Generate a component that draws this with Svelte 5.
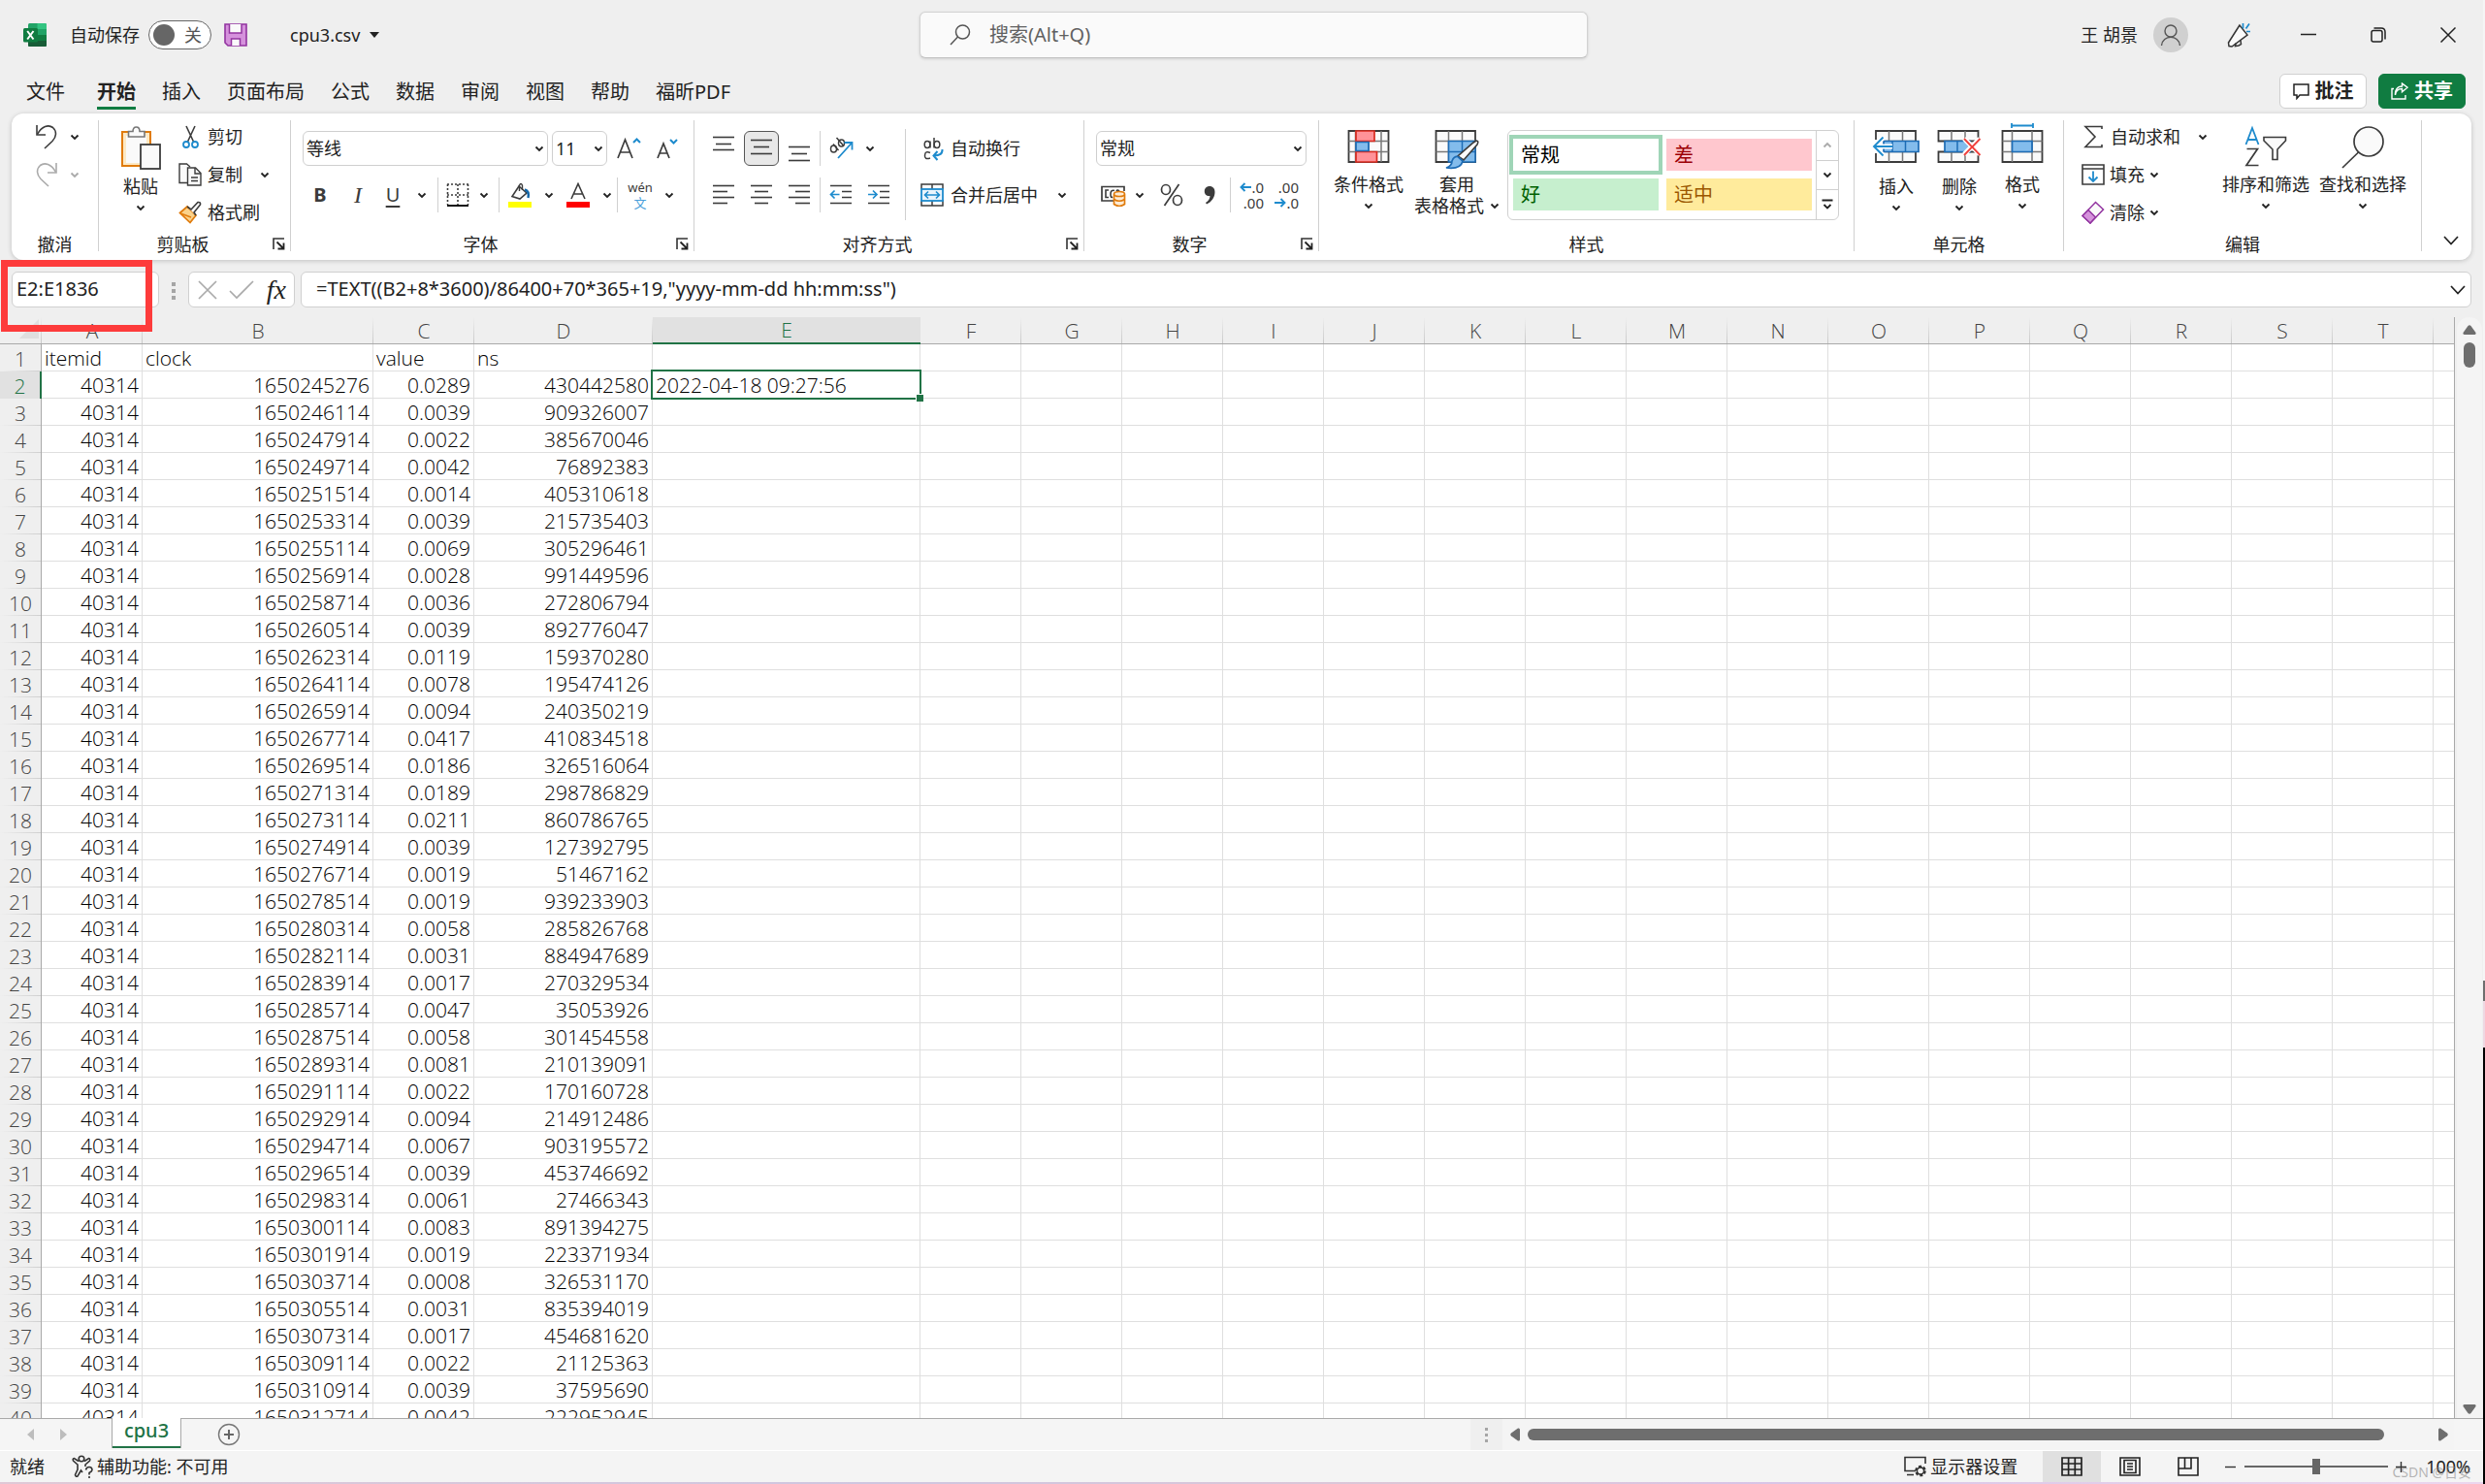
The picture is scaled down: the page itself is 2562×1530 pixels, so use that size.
<script>
  const clocks = [
    1650245276, 1650246114, 1650247914, 1650249714, 1650251514, 1650253314, 1650255114, 1650256914,
    1650258714, 1650260514, 1650262314, 1650264114, 1650265914, 1650267714, 1650269514, 1650271314,
    1650273114, 1650274914, 1650276714, 1650278514, 1650280314, 1650282114, 1650283914, 1650285714,
    1650287514, 1650289314, 1650291114, 1650292914, 1650294714, 1650296514, 1650298314, 1650300114,
    1650301914, 1650303714, 1650305514, 1650307314, 1650309114, 1650310914, 1650312714
  ];
  const values = [
    '0.0289', '0.0039', '0.0022', '0.0042', '0.0014', '0.0039', '0.0069', '0.0028', '0.0036', '0.0039',
    '0.0119', '0.0078', '0.0094', '0.0417', '0.0186', '0.0189', '0.0211', '0.0039', '0.0019', '0.0019',
    '0.0058', '0.0031', '0.0017', '0.0047', '0.0058', '0.0081', '0.0022', '0.0094', '0.0067', '0.0039',
    '0.0061', '0.0083', '0.0019', '0.0008', '0.0031', '0.0017', '0.0022', '0.0039', '0.0042'
  ];
  const ns = [
    430442580, 909326007, 385670046, 76892383, 405310618, 215735403, 305296461, 991449596, 272806794,
    892776047, 159370280, 195474126, 240350219, 410834518, 326516064, 298786829, 860786765, 127392795,
    51467162, 939233903, 285826768, 884947689, 270329534, 35053926, 301454558, 210139091, 170160728,
    214912486, 903195572, 453746692, 27466343, 891394275, 223371934, 326531170, 835394019, 454681620,
    21125363, 37595690, 222952945
  ];
  const rows = clocks.map((c, i) => ({ n: i + 2, clock: c, value: values[i], ns: ns[i] }));
  const widths = { A: 104, B: 238, C: 104, D: 184, E: 276 };
  const cols = 'ABCDEFGHIJKLMNOPQRST'.split('').map((name) => ({ name, w: widths[name] ?? 104 }));
  const blanks = cols.slice(5);
  const tabs = ['文件', '开始', '插入', '页面布局', '公式', '数据', '审阅', '视图', '帮助', '福昕PDF'];
  let active = $state('开始');
  let zoom = $state(50);
</script>

{#snippet chev()}
  <svg class="chev" width="10" height="7" viewBox="0 0 10 7"><path d="M1.5 1.5 5 5 8.5 1.5" /></svg>
{/snippet}

{#snippet launcher()}
  <button class="launcher" aria-label="对话框启动器">
    <svg width="13" height="13" viewBox="0 0 13 13"><path d="M1 12V1H12" stroke="#333" stroke-width="1.6" fill="none" /><path d="M4.500 4.500 11 11M11.500 5.500V11.500H5.500" stroke="#222" stroke-width="1.8" fill="none" /></svg>
  </button>
{/snippet}

{#snippet lines(a)}
  <svg width="24" height="36" viewBox="0 0 24 36">
    {#each a as [x1, x2, y]}<path d="M{x1} {y}.5H{x2}" stroke="#3b3b3b" stroke-width="1.6" />{/each}
  </svg>
{/snippet}

<div class="frame">
  <div class="app">
    <header class="title">
      <div class="t-left">
        <svg class="logo" width="24" height="24" viewBox="0 0 24 24">
          <rect x="5" width="19" height="24" rx="1.500" fill="#21a366" /><path d="M14.500 0H22.500Q24 0 24 1.500V6H14.500z" fill="#33c481" /><path d="M5 6H14.500V12H5z" fill="#107c41" /><path d="M5 12H24V22.500Q24 24 22.500 24H6.500Q5 24 5 22.500z" fill="#185c37" /><path d="M14.500 12H24V18H14.500z" fill="#107c41" />
          <rect y="5" width="15" height="14.500" rx="1.500" fill="#107c41" /><path d="M4.200 8 10.500 16.500M10.500 8 4.200 16.500" stroke="#fff" stroke-width="2" />
        </svg>
        <span class="auto">自动保存</span>
        <button class="toggle" role="switch" aria-checked="false" aria-label="自动保存"><i></i><span>关</span></button>
        <button class="plain save" aria-label="保存">
          <svg width="24" height="24" viewBox="0 0 24 24"><path d="M1 1H23V23H4L1 20z" fill="#d592dc" stroke="#9234a0" stroke-width="1.600" /><path d="M5.500 1V10H18V1M7.500 23V16H16.500V23" fill="#fafafa" stroke="#9234a0" stroke-width="1.500" /></svg>
        </button>
        <button class="plain file">cpu3.csv <svg width="10" height="6" viewBox="0 0 10 6"><path d="M0 0H10L5 6z" fill="#222" /></svg></button>
      </div>
      <label class="search">
        <svg width="22" height="22" viewBox="0 0 22 22" fill="none" stroke="#555" stroke-width="1.500"><circle cx="13.500" cy="8" r="7" /><path d="M8.500 13 1 21" /></svg>
        <input type="search" aria-label="搜索" placeholder="搜索(Alt+Q)" />
      </label>
      <div class="t-right">
        <span class="user">王 胡景</span>
        <button class="avatar" aria-label="帐户">
          <svg width="22" height="24" viewBox="0 0 22 24" fill="none" stroke="#555" stroke-width="1.400"><circle cx="11" cy="8" r="6" /><path d="M1.500 23C2.500 11.500 19.500 11.500 20.500 23" /></svg>
        </button>
        <button class="win" aria-label="即将推出">
          <svg width="24" height="26" viewBox="0 0 24 26" fill="none" stroke="#333" stroke-width="1.500"><path d="M13 3 1.500 21 2 24.500 5 25 21 13z" fill="#fafafa" /><path d="M9 21.500 8.500 24.500 12 24 14.500 22.500 14 18.500" /><path d="M16.500 6.500V1M19.500 6.500 23 1.500M20 9.500H24" stroke="#1e8bcd" stroke-width="1.700" /></svg>
        </button>
        <button class="win" aria-label="最小化"><svg width="16" height="16" viewBox="0 0 16 16"><path d="M0 7.500H16" stroke="#222" stroke-width="1.500" /></svg></button>
        <button class="win" aria-label="还原"><svg width="16" height="16" viewBox="0 0 16 16" fill="none" stroke="#222" stroke-width="1.500"><rect x="1" y="3.500" width="11" height="11.500" rx="2" /><path d="M3.500 1H11Q15 1 15 5V12.500" /></svg></button>
        <button class="win" aria-label="关闭"><svg width="16" height="16" viewBox="0 0 16 16"><path d="M.5 .5 15.500 15.500M15.500 .5 .5 15.500" stroke="#222" stroke-width="1.500" /></svg></button>
      </div>
    </header>

    <nav class="tabs">
      {#each tabs as t}
        <button class="tab" class:on={t === active} onclick={() => (active = t)}>{t}</button>
      {/each}
      <div class="tab-actions">
        <button class="act"><svg width="17" height="18" viewBox="0 0 17 18"><path d="M1 2H16V13H7L4 16.500V13H1z" fill="none" stroke="#222" stroke-width="1.500" /></svg>批注</button>
        <button class="act share"><svg width="18" height="18" viewBox="0 0 18 18" fill="none" stroke="#fff" stroke-width="1.400"><path d="M3 6.500H1V17H15V13" /><path d="M4.500 13C5 8 8 6.500 11.500 6.500V9.800L17 5.200 11.500 1V4C6.500 4 4 8 4.500 13z" /></svg>共享</button>
      </div>
    </nav>

    <section class="ribbon" aria-label="功能区">
      <div class="group g-undo">
        <div class="body col3">
          <button class="srow" aria-label="撤消"><svg width="24" height="26" viewBox="0 0 24 26" fill="none" stroke="#3b3b3b" stroke-width="1.600"><path d="M2 1V11H11" /><path d="M2.500 10.500C7 2 14 0 18.500 3.500C23 7.500 22 13.500 18 17.500L10 25" /></svg>{@render chev()}</button>
          <button class="srow dis" aria-label="恢复" disabled><svg width="24" height="26" viewBox="0 0 24 26" fill="none" stroke="#aaa" stroke-width="1.600"><path d="M22 1V11H13" /><path d="M21.500 10.500C17 2 10 0 5.500 3.500C1 7.500 2 13.500 6 17.500L14 25" /></svg>{@render chev()}</button>
        </div>
        <div class="label"><span>撤消</span></div>
      </div>

      <div class="group g-clip">
        <div class="body">
          <button class="big low w54">
            <svg width="48" height="48" viewBox="0 0 48 48"><rect x="5" y="9" width="29" height="35" fill="#fde9c4" stroke="#e07b0c" stroke-width="2" /><rect x="9" y="13" width="21" height="28" fill="#fafafa" /><path d="M11.500 14V8.500H16Q16 4 19.500 4T23 8.500H28V14z" fill="#fafafa" stroke="#777" stroke-width="1.600" /><rect x="24" y="22" width="20" height="25" fill="#fafafa" stroke="#3b3b3b" stroke-width="1.800" /></svg>
            <span>粘贴</span>{@render chev()}
          </button>
          <div class="col3">
            <button class="srow"><svg width="24" height="24" viewBox="0 0 24 24" fill="none"><path d="M8 1 15.500 17M17 1 9.500 17" stroke="#3b3b3b" stroke-width="1.600" /><circle cx="8" cy="20" r="3" stroke="#1e8bcd" stroke-width="1.800" /><circle cx="17" cy="20" r="3" stroke="#1e8bcd" stroke-width="1.800" /></svg>剪切</button>
            <button class="srow">
              <svg width="24" height="24" viewBox="0 0 24 24" fill="#fafafa" stroke="#3b3b3b" stroke-width="1.400"><path d="M9 20.500H1V1H8.500L12 4" /><path d="M9.500 5H17.500L23 10.500V23H9.500z" /><path d="M17 5V11H23M13 15H20M13 18.500H20" fill="none" /></svg>复制<b></b>{@render chev()}
            </button>
            <button class="srow"><svg width="24" height="24" viewBox="0 0 24 24"><path d="M1.500 12.500 9 6 18 15 12 22.500z" fill="#fbd28a" stroke="#e07b0c" stroke-width="1.700" /><path d="M2 13 13 17" stroke="#e07b0c" stroke-width="1.400" /><path d="M9 6 13 9 20 1.500Q23 1 22.500 4L16 12 18 15" fill="#fafafa" stroke="#3b3b3b" stroke-width="1.600" /></svg>格式刷</button>
          </div>
        </div>
        <div class="label"><span>剪贴板</span>{@render launcher()}</div>
      </div>

      <div class="group g-font">
        <div class="body rows2">
          <div class="r">
            <label class="sel fontsel"><select aria-label="字体"><option>等线</option></select>{@render chev()}</label>
            <label class="sel sizesel"><select aria-label="字号"><option>11</option></select>{@render chev()}</label>
            <button class="ib ml" aria-label="增大字号"><svg width="26" height="26" viewBox="0 0 26 26" fill="none"><path d="M2 23 9.500 4 17 23M4.500 17H14.500" stroke="#3b3b3b" stroke-width="1.700" /><path d="M18 7 21.500 3.500 25 7" stroke="#1e8bcd" stroke-width="2" /></svg></button>
            <button class="ib ml" aria-label="减小字号"><svg width="26" height="26" viewBox="0 0 26 26" fill="none"><path d="M3 23 9 8 15 23M5 18H13" stroke="#3b3b3b" stroke-width="1.700" /><path d="M16 4 19.500 7.500 23 4" stroke="#1e8bcd" stroke-width="2" /></svg></button>
          </div>
          <div class="r tight">
            <button class="ib bold" aria-label="加粗">B</button>
            <button class="ib wide ital" aria-label="倾斜">I</button>
            <button class="ib slim und" aria-label="下划线">U</button>
            <button class="ib slim" aria-label="下划线选项">{@render chev()}</button>
            <i class="sep"></i>
            <button class="ib" aria-label="边框"><svg width="24" height="24" viewBox="0 0 24 24" fill="none" stroke="#3b3b3b" stroke-width="1.600"><path d="M1 1H23M1 12H23M1.500 1V22M12 1V22M22.500 1V22" stroke-dasharray="2 2" /><path d="M1 23H23" stroke="#111" stroke-width="2" /></svg></button>
            <button class="ib cv" aria-label="边框选项">{@render chev()}</button>
            <i class="sep brd"></i>
            <button class="ib wide" aria-label="填充颜色"><svg width="24" height="26" viewBox="0 0 24 26" fill="none"><path d="M11 4 19 11 12 17 4 14.500z" fill="#fafafa" stroke="#3b3b3b" stroke-width="1.600" /><path d="M11.500 9V3Q13 0 14.500 3V8" stroke="#3b3b3b" stroke-width="1.400" /><path d="M17 7.500Q22 9 20.500 16" stroke="#1266a8" stroke-width="2.400" /><path d="M0 20H24V26H0z" fill="#ff0" /></svg></button>
            <button class="ib cv" aria-label="填充颜色选项">{@render chev()}</button>
            <button class="ib wide" aria-label="字体颜色"><svg width="24" height="26" viewBox="0 0 24 26" fill="none"><path d="M5 17 12 1.500 19 17M7.500 12H16.500" stroke="#3b3b3b" stroke-width="1.600" /><path d="M0 20H24V26H0z" fill="#f00" /></svg></button>
            <button class="ib cv" aria-label="字体颜色选项">{@render chev()}</button>
            <i class="sep"></i>
            <button class="ib wide wen" aria-label="拼音"><span>wén</span><em>文</em></button>
            <button class="ib cv" aria-label="拼音选项">{@render chev()}</button>
          </div>
        </div>
        <div class="label"><span>字体</span>{@render launcher()}</div>
      </div>

      <div class="group g-align">
        <div class="body">
          <div class="rows2">
            <div class="r g3">
              <button class="ib" aria-label="顶端对齐">{@render lines([[1, 23, 6], [4, 20, 13], [1, 23, 19]])}</button>
              <button class="ib pressed" aria-label="垂直居中">{@render lines([[1, 23, 9], [4, 20, 16], [1, 23, 23]])}</button>
              <button class="ib" aria-label="底端对齐">{@render lines([[1, 23, 16], [4, 20, 23], [1, 23, 30]])}</button>
              <i class="sep"></i>
              <button class="ib" aria-label="方向"><svg width="26" height="26" viewBox="0 0 26 26" fill="none"><g stroke="#3b3b3b" stroke-width="1.500"><ellipse cx="5.500" cy="13.500" rx="3" ry="3.500" /><path d="M5 8.500 10.500 15M8.500 2 15.500 10" /><ellipse cx="13.500" cy="7.500" rx="3" ry="3.500" /></g><path d="M10 23 24 7.500M16.500 7H24.500V14.500" stroke="#1e8bcd" stroke-width="1.800" /></svg></button>
              <button class="ib cv" aria-label="方向选项">{@render chev()}</button>
            </div>
            <div class="r g3">
              <button class="ib" aria-label="左对齐">{@render lines([[1, 23, 8], [1, 16, 14], [1, 23, 20], [1, 16, 26]])}</button>
              <button class="ib" aria-label="居中">{@render lines([[1, 23, 8], [5, 19, 14], [1, 23, 20], [5, 19, 26]])}</button>
              <button class="ib" aria-label="右对齐">{@render lines([[1, 23, 8], [8, 23, 14], [1, 23, 20], [8, 23, 26]])}</button>
              <i class="sep"></i>
              <button class="ib" aria-label="减少缩进量"><svg width="24" height="24" viewBox="0 0 24 24" fill="none"><path d="M1 2.500H23M13 8.500H23M13 14.500H23M1 20.500H23" stroke="#3b3b3b" stroke-width="1.600" /><path d="M10.500 11.500H2M5.500 7.500 1.500 11.500 5.500 15.500" stroke="#1e8bcd" stroke-width="1.700" /></svg></button>
              <button class="ib" aria-label="增加缩进量"><svg width="24" height="24" viewBox="0 0 24 24" fill="none"><path d="M1 2.500H23M13 8.500H23M13 14.500H23M1 20.500H23" stroke="#3b3b3b" stroke-width="1.600" /><path d="M1 11.500H10M6 7.500 10 11.500 6 15.500" stroke="#1e8bcd" stroke-width="1.700" /></svg></button>
            </div>
          </div>
          <i class="tallsep"></i>
          <div class="rows2">
            <button class="wrow"><svg width="24" height="26" viewBox="0 0 24 26" fill="none"><g stroke="#3b3b3b" stroke-width="1.500"><ellipse cx="7" cy="9" rx="2.800" ry="3.500" /><path d="M10 5.500V12.500M14 2V12.500" /><ellipse cx="17" cy="9" rx="2.800" ry="3.500" /><path d="M10 17.500Q5 15 4.500 20T10 23" /></g><path d="M22.500 14Q23 20.500 14 20.500M17.500 16 13.500 20.500 17.500 25" stroke="#1e8bcd" stroke-width="2" /></svg>自动换行</button>
            <button class="wrow"><svg width="24" height="24" viewBox="0 0 24 24" fill="none"><path d="M1 6V1H23V6M1 17V23H23V17M12 1V6M12 18V23" stroke="#3b3b3b" stroke-width="1.500" /><rect x="1" y="6" width="22" height="12" fill="#eaf4fc" stroke="#1e8bcd" stroke-width="1.800" /><path d="M4.500 12H19.500M8 8.500 4.500 12 8 15.500M16 8.500 19.500 12 16 15.500" stroke="#1e8bcd" stroke-width="1.600" /></svg>合并后居中<b></b>{@render chev()}</button>
          </div>
        </div>
        <div class="label"><span>对齐方式</span>{@render launcher()}</div>
      </div>

      <div class="group g-num">
        <div class="body rows2">
          <div class="r"><label class="sel numsel"><select aria-label="数字格式"><option>常规</option></select>{@render chev()}</label></div>
          <div class="r tight">
            <button class="ib" aria-label="会计数字格式"><svg width="26" height="24" viewBox="0 0 26 24" fill="none"><path d="M13 18H1V3.500H24V8" stroke="#3b3b3b" stroke-width="1.700" /><path d="M8 7H5V14.500H8M14 7.500Q10 6.500 10 11T12 14M19 8Q17 6 16 8" stroke="#3b3b3b" stroke-width="1.600" /><path d="M13.500 11.500V21.500Q19 25.500 24.500 21.500V11.500" fill="#fdecd6" stroke="#e07b0c" stroke-width="1.700" /><ellipse cx="19" cy="11" rx="5.500" ry="2.500" fill="#fdecd6" stroke="#e07b0c" stroke-width="1.700" /><path d="M13.500 16.500Q19 20 24.500 16.500" stroke="#e07b0c" stroke-width="1.700" /></svg></button>
            <button class="ib cv" aria-label="会计数字格式选项">{@render chev()}</button>
            <i class="gap"></i>
            <button class="ib wide" aria-label="百分比样式"><svg width="24" height="24" viewBox="0 0 24 24" fill="none" stroke="#3b3b3b" stroke-width="1.700"><ellipse cx="6" cy="6.500" rx="4.500" ry="5" /><ellipse cx="18" cy="17.500" rx="4.500" ry="5" /><path d="M19.500 1 4.500 23" /></svg></button>
            <button class="ib" aria-label="千位分隔样式"><svg width="12" height="20" viewBox="0 0 12 20"><path d="M6 1C9.500 1 11.500 3.500 11.500 7C11.500 12.500 8 17.500 3 19.500L2 18C5 16 6.500 13.500 6.500 11C3 11.500 .8 9 .8 6.200C.8 3.200 3 1 6 1z" fill="#3b3b3b" /></svg></button>
            <i class="sep mx"></i>
            <button class="ib dec" aria-label="增加小数位数"><span><svg width="12" height="10" viewBox="0 0 12 10" fill="none" stroke="#1e8bcd" stroke-width="1.900"><path d="M12 5H1.500M5.500 1 1.500 5 5.500 9" /></svg>.0</span><span>.00</span></button>
            <button class="ib dec" aria-label="减少小数位数"><span>.00</span><span><svg width="12" height="10" viewBox="0 0 12 10" fill="none" stroke="#1e8bcd" stroke-width="1.900"><path d="M0 5H10.500M6.500 1 10.500 5 6.500 9" /></svg>.0</span></button>
          </div>
        </div>
        <div class="label"><span>数字</span>{@render launcher()}</div>
      </div>

      <div class="group g-style">
        <div class="body">
          <button class="big w72">
            <svg width="44" height="48" viewBox="0 0 44 48"><path d="M1.500 8H42.500V40H1.500z" fill="#fafafa" stroke="#3b3b3b" stroke-width="1.800" /><path d="M8.500 8V40M22 8V40M35 8V40M1.500 18.500H42.500M1.500 29.500H42.500" stroke="#777" stroke-width="1.500" /><path d="M9 8H28V18.500H9zM9 29.500H30.500V40H9z" fill="#ff9298" stroke="#d92b1f" stroke-width="1.700" /><path d="M9 19.500H22V28.500H9z" fill="#83bcec" stroke="#1d6cb5" stroke-width="1.700" /></svg>
            <span>条件格式</span>{@render chev()}
          </button>
          <button class="big w92">
            <svg width="46" height="48" viewBox="0 0 46 48"><path d="M1.500 8H42V40H1.500z" fill="#fafafa" stroke="#3b3b3b" stroke-width="1.800" /><path d="M14.500 8V40M28.500 8V40M1.500 18.500H42M1.500 29.500H42" stroke="#777" stroke-width="1.500" /><path d="M14.500 18.500H42V40H14.500z" fill="#83bcec" stroke="#1d6cb5" stroke-width="1.600" /><path d="M28.500 18.500V40M14.500 29.500H42" stroke="#1d6cb5" stroke-width="1.500" /><path d="M43 18Q46 18 44 22L30 38 24 34 40 20z" fill="#fafafa" stroke="#3b3b3b" stroke-width="1.600" /><path d="M24 34.500 29 39Q27 48 12 46Q18 44 18 39Q20 34 24 34.500z" fill="#83bcec" stroke="#1d6cb5" stroke-width="1.700" /></svg>
            <span>套用</span><span class="inl">表格格式{@render chev()}</span>
          </button>
          <div class="gallery">
            <div class="swatches">
              <button class="sw normal">常规</button><button class="sw bad">差</button>
              <button class="sw good">好</button><button class="sw neutral">适中</button>
            </div>
            <div class="scroller">
              <button class="dis" aria-label="上一行" disabled><svg class="chev" width="10" height="7" viewBox="0 0 10 7"><path d="M1.500 5.500 5 2 8.500 5.500" /></svg></button>
              <button aria-label="下一行">{@render chev()}</button>
              <button aria-label="其他"><svg class="chev" width="12" height="12" viewBox="0 0 12 12"><path d="M.5 1.500H11.500M2.500 6 6 9.500 9.500 6" /></svg></button>
            </div>
          </div>
        </div>
        <div class="label"><span>样式</span></div>
      </div>

      <div class="group g-cells">
        <div class="body">
          <button class="big low w60">
            <svg width="50" height="48" viewBox="0 0 50 48" fill="none"><path d="M4 8H45V40H4z" fill="#fafafa" stroke="#3b3b3b" stroke-width="1.800" /><path d="M17.500 8V40M31.500 8V40M4 18.500H45M4 29.500H45" stroke="#777" stroke-width="1.500" /><path d="M0 17H12V31H0z" fill="#fff" /><path d="M12 18.500H48V29.500H12z" fill="#83bcec" stroke="#1d6cb5" stroke-width="1.700" /><path d="M21 18.500V29.500M34.500 18.500V29.500" stroke="#1d6cb5" stroke-width="1.500" /><path d="M21 24H3M12 14.500 2 24 12 33.500" stroke="#fff" stroke-width="5" /><path d="M21 24H2M11.500 14.500 2 24 11.500 33.500" stroke="#1e8bcd" stroke-width="1.900" /></svg>
            <span>插入</span>{@render chev()}
          </button>
          <button class="big low w60">
            <svg width="46" height="48" viewBox="0 0 46 48" fill="none"><path d="M1.500 8H42.500V18.500H1.500zM1.500 29.500H42.500V40H1.500z" fill="#fafafa" stroke="#3b3b3b" stroke-width="1.800" /><path d="M15 8V18.500M29 8V18.500M15 29.500V40M29 29.500V40" stroke="#777" stroke-width="1.500" /><path d="M8 18.500H34V29.500H8z" fill="#83bcec" stroke="#1d6cb5" stroke-width="1.700" /><path d="M21 18.500V29.500" stroke="#1d6cb5" stroke-width="1.500" /><path d="M28 16 44 32M44 16 28 32" stroke="#fff" stroke-width="5" /><path d="M28 16 44.500 33M44.500 16 28 33" stroke="#f0403c" stroke-width="1.900" /></svg>
            <span>删除</span>{@render chev()}
          </button>
          <button class="big w60">
            <svg width="44" height="48" viewBox="0 0 44 48" fill="none"><path d="M1.500 8H42.500V40H1.500z" fill="#fafafa" stroke="#3b3b3b" stroke-width="1.800" /><path d="M11.500 8V40M32 8V40M1.500 18.500H42.500M1.500 29.500H42.500" stroke="#777" stroke-width="1.500" /><path d="M11.500 18.500H32V29.500H11.500z" fill="#83bcec" stroke="#1d6cb5" stroke-width="1.700" /><path d="M11 2.500H33M11 0V5M33 0V5" stroke="#1e8bcd" stroke-width="1.800" /></svg>
            <span>格式</span>{@render chev()}
          </button>
        </div>
        <div class="label"><span>单元格</span></div>
      </div>

      <div class="group g-edit">
        <div class="body">
          <div class="col3 e3">
            <button class="srow"><svg width="24" height="24" viewBox="0 0 24 24" fill="none"><path d="M21 4V1.500H4L14 12 4 22.500H21V20" stroke="#3b3b3b" stroke-width="1.600" /></svg>自动求和<b></b>{@render chev()}</button>
            <button class="srow near"><svg width="24" height="24" viewBox="0 0 24 24" fill="none"><path d="M1 2H23V22H1zM1 6H23" stroke="#3b3b3b" stroke-width="1.600" /><path d="M12 8.500V19M7.500 14.500 12 19 16.500 14.500" stroke="#1e8bcd" stroke-width="1.800" /></svg>填充{@render chev()}</button>
            <button class="srow near"><svg width="24" height="24" viewBox="0 0 24 24"><path d="M14.500 1.500 22.500 9 9 23 1 15.500z" fill="#fafafa" stroke="#9234a0" stroke-width="1.500" /><path d="M7 9.500 14.500 17 9 23 1 15.500z" fill="#d592dc" stroke="#9234a0" stroke-width="1.500" /></svg>清除{@render chev()}</button>
          </div>
          <button class="big w90">
            <svg width="44" height="48" viewBox="0 0 44 48" fill="none"><path d="M1.500 22 8 5 14.500 22M3.500 17H12.500" stroke="#1e8bcd" stroke-width="1.800" /><path d="M2.500 26.500H13.500L2 43.500H14.500" stroke="#3b3b3b" stroke-width="1.700" /><path d="M20 14.500H42.500V18L34 27V37.500H29V27L20 18z" fill="#fafafa" stroke="#3b3b3b" stroke-width="1.600" /></svg>
            <span>排序和筛选</span>{@render chev()}
          </button>
          <button class="big w90 find">
            <svg width="46" height="48" viewBox="0 0 46 48" fill="none" stroke="#3b3b3b" stroke-width="1.700"><circle cx="29" cy="19" r="15" fill="#fafafa" /><path d="M18.500 30 2 46" /></svg>
            <span>查找和选择</span>{@render chev()}
          </button>
        </div>
        <div class="label"><span>编辑</span></div>
      </div>
      <button class="collapse" aria-label="折叠功能区"><svg width="16" height="10" viewBox="0 0 16 10"><path d="M1 1 8 8.500 15 1" fill="none" stroke="#222" stroke-width="1.700" /></svg></button>
    </section>

    <div class="fbar">
      <input class="box name" aria-label="名称框" value="E2:E1836" />
      <div class="dots"><i></i><i></i><i></i></div>
      <div class="box fx">
        <button aria-label="取消"><svg width="20" height="20" viewBox="0 0 20 20"><path d="M1 1 19 19M19 1 1 19" stroke="#aaa" stroke-width="1.700" /></svg></button>
        <button aria-label="输入"><svg width="26" height="20" viewBox="0 0 26 20"><path d="M1 11 8 18 25 1" fill="none" stroke="#aaa" stroke-width="1.700" /></svg></button>
        <button class="fxb" aria-label="插入函数">fx</button>
      </div>
      <div class="box formula">
        <input aria-label="编辑栏" value={'=TEXT((B2+8*3600)/86400+70*365+19,"yyyy-mm-dd hh:mm:ss")'} />
        <button aria-label="展开编辑栏"><svg width="16" height="10" viewBox="0 0 16 10"><path d="M1 1 8 8.500 15 1" fill="none" stroke="#222" stroke-width="1.700" /></svg></button>
      </div>
      <div class="marker"></div>
    </div>

    <main class="work">
      <div class="sheet">
        <table>
          <colgroup>
            <col class="rh" />
            {#each cols as c}<col style:width={c.w + 'px'} />{/each}
            <col />
          </colgroup>
          <thead>
            <tr>
              <th class="corner" aria-label="全选"><svg width="20" height="20" viewBox="0 0 20 20"><path d="M20 0V20H0z" fill="#dfdfdf" /></svg></th>
              {#each cols as c}<th scope="col" class:sel-h={c.name === 'E'}>{c.name}</th>{/each}
              <th class="last"></th>
            </tr>
          </thead>
          <tbody>
            <tr><th scope="row">1</th><td>itemid</td><td>clock</td><td>value</td><td>ns</td><td></td>{#each blanks as b}<td></td>{/each}<td class="last"></td></tr>
            {#each rows as r}
              <tr>
                <th scope="row" class:sel-r={r.n === 2}>{r.n}</th>
                <td class="num">40314</td><td class="num">{r.clock}</td><td class="num">{r.value}</td><td class="num">{r.ns}</td>
                {#if r.n === 2}<td class="cur">2022-04-18 09:27:56</td>{:else}<td></td>{/if}
                {#each blanks as b}<td></td>{/each}<td class="last"></td>
              </tr>
            {/each}
          </tbody>
        </table>
      </div>
      <div class="vscroll">
        <svg width="14" height="10" viewBox="0 0 14 10"><path d="M5.500 1Q7 -.5 8.500 1L13.500 8Q14 10 12 10H2Q0 10 .5 8z" fill="#6e6e6e" /></svg>
        <i></i>
        <svg width="14" height="10" viewBox="0 0 14 10"><path d="M5.500 9Q7 10.500 8.500 9L13.500 2Q14 0 12 0H2Q0 0 .5 2z" fill="#6e6e6e" /></svg>
      </div>
    </main>

    <div class="sheets">
      <button class="nav" aria-label="上一张"><svg width="7" height="12" viewBox="0 0 7 12"><path d="M7 0V12L0 6z" fill="#bdbdbd" /></svg></button>
      <button class="nav" aria-label="下一张"><svg width="7" height="12" viewBox="0 0 7 12"><path d="M0 0V12L7 6z" fill="#bdbdbd" /></svg></button>
      <button class="stab">cpu3</button>
      <button class="add" aria-label="新工作表"><svg width="24" height="24" viewBox="0 0 24 24" fill="none"><circle cx="12" cy="12" r="10.500" stroke="#777" stroke-width="1.400" /><path d="M12 7V17M7 12H17" stroke="#666" stroke-width="2" /></svg></button>
      <div class="hscroll">
        <div class="grip"><i></i><i></i><i></i></div>
        <svg width="10" height="14" viewBox="0 0 10 14"><path d="M1 5.500Q-.5 7 1 8.500L8 13.500Q10 14 10 12V2Q10 0 8 .5z" fill="#6e6e6e" /></svg>
        <div class="track"><i></i></div>
        <svg width="10" height="14" viewBox="0 0 10 14"><path d="M9 5.500Q10.500 7 9 8.500L2 13.500Q0 14 0 12V2Q0 0 2 .5z" fill="#6e6e6e" /></svg>
      </div>
    </div>

    <footer class="status">
      <span>就绪</span>
      <button class="acc"><svg width="22" height="24" viewBox="0 0 22 24" fill="none" stroke="#333" stroke-width="1.600"><circle cx="10" cy="4" r="2.800" /><path d="M7 6.500 2.500 3.500Q.5 4 1.500 6L6 10V15L3.500 20.500Q4 23 6 22L9.500 16 11 18M13 6.500 17.500 3.500Q19.500 4 18.500 6L14 10V12" /><path d="M14.500 15.500Q15 12.500 18 12.500T21 15.500Q21 17 18 18.500V20.500M18 22V24" /></svg>辅助功能: 不可用</button>
      <div class="st-right">
        <button class="disp"><svg width="24" height="24" viewBox="0 0 24 24" fill="none" stroke="#333" stroke-width="1.600"><path d="M12 16.500H1V2.500H22V9M3 20.500H10" /><circle cx="17" cy="16.500" r="4.500" stroke-width="2.600" stroke-dasharray="2.800 1.900" /><circle cx="17" cy="16.500" r="3.600" /></svg>显示器设置</button>
        <button class="view on" aria-label="普通"><svg width="22" height="20" viewBox="0 0 22 20" fill="none" stroke="#222" stroke-width="1.700"><path d="M1 1H21V19H1zM1 7H21M1 13H21M7.600 1V19M14.300 1V19" /></svg></button>
        <button class="view" aria-label="页面布局"><svg width="22" height="20" viewBox="0 0 22 20" fill="none" stroke="#222" stroke-width="1.600"><path d="M1 1H21V19H1zM5 3.500H17V16.500H5zM8 7H14M8 10H14M8 13H14" /></svg></button>
        <button class="view" aria-label="分页预览"><svg width="22" height="20" viewBox="0 0 22 20" fill="none" stroke="#222" stroke-width="1.600"><path d="M1 1H21V19H1zM1 12H14V1M7.500 1V12" /></svg></button>
        <button class="zb" aria-label="缩小"><svg width="11" height="11" viewBox="0 0 11 11"><path d="M0 5.500H11" stroke="#333" stroke-width="1.400" /></svg></button>
        <input type="range" aria-label="显示比例" min="0" max="100" bind:value={zoom} />
        <button class="zb" aria-label="放大"><svg width="11" height="11" viewBox="0 0 11 11"><path d="M0 5.500H11M5.500 0V11" stroke="#333" stroke-width="1.400" /></svg></button>
        <span class="pct">100%</span>
        <span class="wm">CSDN @日安</span>
      </div>
    </footer>
    <div class="floor"></div>
  </div>
  <div class="edge"><i class="e1"></i><i class="e2"></i><i class="e3b"></i><i class="e4"></i></div>
</div>

<style>
  :global(body) { margin: 0; }
  .frame, .frame :global(*) { box-sizing: border-box; }
  .frame { display: flex; height: 100vh; min-height: 600px; overflow: hidden; background: #efefef; color: #222; font: 18px/24px "Noto Sans", "Noto Sans CJK SC", sans-serif; }
  .app { flex: 1; min-width: 0; display: flex; flex-direction: column; }
  button { font: inherit; color: inherit; background: none; border: 0; padding: 0; margin: 0; display: flex; align-items: center; justify-content: center; white-space: nowrap; }
  input, select { font: inherit; color: inherit; border: 0; background: none; padding: 0; margin: 0; outline: 0; min-width: 0; }
  svg { display: block; flex: none; }
  i { display: block; }
  .chev path { fill: none; stroke: #222; stroke-width: 1.8; }
  .dis .chev path { stroke: #aaa; }

  .title { display: grid; grid-template-columns: 948fr 689fr 923fr; height: 72px; align-items: center; flex: none; }
  .t-left { display: flex; align-items: center; padding-left: 24px; }
  .auto { margin-left: 24px; }
  .toggle { width: 65px; height: 30px; margin-left: 9px; border: 1px solid #666; border-radius: 15px; background: #fff; color: #555; justify-content: space-between; padding: 0 9px 0 4px; }
  .toggle i { width: 22px; height: 22px; border-radius: 50%; background: #666; }
  .save { margin-left: 13px; }
  .file { margin-left: 44px; gap: 10px; }
  .search { display: flex; align-items: center; gap: 19px; height: 48px; padding: 0 30px; background: #fafafa; border: 1px solid #d2d2d2; border-bottom-color: #c2c2c2; border-radius: 6px; box-shadow: 0 1px 3px #0002; font-size: 20px; }
  .search input { flex: 1; }
  .search input::placeholder { color: #616161; opacity: 1; }
  .t-right { display: flex; align-items: center; justify-content: flex-end; }
  .user { margin-right: 16px; white-space: nowrap; }
  .avatar { width: 36px; height: 36px; border-radius: 50%; background: #d0d0d0; margin-right: 16px; }
  .win { width: 72px; height: 48px; }

  .tabs { display: flex; height: 45px; flex: none; padding-left: 27px; gap: 27px; font-size: 20px; align-items: flex-start; }
  .tab { height: 41px; padding-top: 8px; border-bottom: 3px solid transparent; }
  .tab:first-child { margin-right: 6px; }
  .tab.on { font-weight: 700; border-color: #107c41; }
  .tab-actions { display: flex; gap: 12px; margin-left: auto; padding: 4px 18px 0 0; }
  .act { width: 90px; height: 36px; gap: 6px; font-weight: 700; background: #fff; border: 1px solid #d0d0d0; border-radius: 6px; }
  .act.share { background: #107c41; border-color: #107c41; color: #fff; }

  .ribbon { display: flex; flex: none; margin: 0 12px; padding: 7px 0 9px; height: 151px; background: #fff; border-radius: 12px; box-shadow: 0 1px 5px #0003; }
  .group { display: flex; flex-direction: column; flex: none; border-right: 1px solid #d0d0d0; }
  .body { display: flex; height: 120px; flex: none; }
  .label { display: flex; height: 15px; line-height: 16px; align-items: center; }
  .label span { flex: 1; text-align: center; }
  .launcher { width: 24px; padding-right: 0; height: 15px; }
  .g-undo { width: 90px; }
  .g-undo .body { padding-left: 24px; }
  .g-undo .srow { gap: 12px; }
  .g-clip { width: 198px; }
  .g-clip .body { padding-left: 16px; gap: 12px; }
  .g-font { width: 416px; padding-left: 0; }
  .g-font .body, .g-num .body { padding-left: 12px; }
  .g-align { width: 402px; }
  .g-align .body { padding-left: 12px; }
  .g-num { width: 242px; }
  .g-style { width: 552px; }
  .g-style .body { padding-left: 15px; }
  .g-cells { width: 216px; }
  .g-cells .body { padding-left: 13px; gap: 5px; }
  .g-edit { width: 369px; }
  .g-edit .body { padding-left: 18px; }
  .col3 { display: flex; flex-direction: column; align-items: flex-start; gap: 5px; }
  .e3 { width: 145px; }
  .srow { height: 34px; gap: 6px; }
  .srow b, .wrow b { width: 6px; }
  .rows2 { display: flex; flex-direction: column; gap: 12px; padding-top: 11px; align-items: flex-start; }
  .r { display: flex; height: 36px; align-items: center; gap: 4px; }
  .r.tight { gap: 0; }
  .r.g3 { gap: 3px; }
  .sel { position: relative; display: block; height: 36px; border: 1px solid #cfcfcf; border-radius: 6px; }
  .sel select { appearance: none; width: 100%; height: 100%; padding-left: 3px; }
  .sel .chev, .sel :global(.chev) { position: absolute; right: 3px; top: 14px; pointer-events: none; }
  .fontsel { width: 253px; }
  .sizesel { width: 57px; }
  .numsel { width: 217px; }
  .ib { width: 36px; height: 36px; flex: none; font-size: 20px; color: #3b3b3b; }
  .ib.wide { width: 42px; }
  .ib.slim { width: 30px; }
  .ib.cv { width: 18px; }
  .bold { font-weight: 700; }
  .ital { font-family: "Liberation Serif", serif; font-style: italic; font-size: 24px; }
  .und { text-decoration: underline; text-underline-offset: 4px; }
  .pressed { background: #e8e8e8; border: 1px solid #555; border-radius: 6px; }
  .sep { width: 1px; height: 36px; background: #d0d0d0; flex: none; }
  .sep.mx { margin: 0 3px; }
  .gap { width: 3px; }
  .g-font .sep { margin-right: 2px; margin-left: 1px; }
  .g-font .sep.brd { margin-left: 6px; margin-right: 0; }
  .tallsep { width: 1px; height: 94px; margin: 9px 15px 0 9px; background: #d0d0d0; }
  .wrow { height: 36px; gap: 7px; }
  .wen { flex-direction: column; font-size: 13px; line-height: 15px; }
  .wen em { font-style: normal; color: #4a9fdb; line-height: 16px; }
  .dec { flex-direction: column; align-items: flex-end; font-size: 15px; line-height: 16px; padding-right: 5px; }
  .dec span { display: flex; align-items: center; }
  .big { flex-direction: column; justify-content: flex-start; padding-top: 3px; line-height: 22px; height: 104px; flex: none; }
  .big svg { margin-bottom: 4px; }
  .big.low > svg:first-child { margin-bottom: 6px; }
  .big :global(.chev) { margin: 8px 0 0; }
  .big .inl { display: flex; gap: 6px; align-items: center; }
  .big .inl :global(.chev) { margin: 0; }
  .srow.near { gap: 5px; }
  .w54 { width: 54px; } .w60 { width: 60px; } .w72 { width: 72px; margin-right: 10px; } .w92 { width: 90px; margin-right: 7px; } .w90 { width: 90px; } .find { margin-left: 10px; }
  .gallery { display: flex; width: 342px; height: 93px; margin-top: 10px; border: 1px solid #d0d0d0; border-radius: 6px; }
  .swatches { flex: 1; display: grid; grid-template-columns: 1fr 1fr; grid-template-rows: 33px 33px; gap: 8px; padding: 8px 4px 0 5px; font-size: 20px; }
  .sw { justify-content: flex-start; padding-left: 8px; color: #000; }
  .normal { outline: 4px solid #9fd5b7; }
  .bad { background: #ffc7ce; color: #9c0006; }
  .good { background: #c6efce; color: #006100; }
  .neutral { background: #ffeb9c; color: #9c5700; }
  .scroller { width: 23px; display: flex; flex-direction: column; border-left: 1px solid #d0d0d0; }
  .scroller button { flex: 1; }
  .scroller button + button { border-top: 1px solid #d0d0d0; }
  .collapse { flex: 1; align-items: flex-end; padding: 0 0 6px 8px; }

  .fbar { position: relative; display: flex; flex: none; height: 59px; padding: 12px 12px 0; align-items: flex-start; font-size: 20px; }
  .box { height: 37px; background: #fff; border: 1px solid #d0d0d0; border-radius: 6px; }
  .name { width: 152px; padding: 0 0 2px 4px; flex: none; }
  .dots { width: 30px; padding-top: 11px; display: flex; flex-direction: column; gap: 3px; align-items: center; flex: none; }
  .dots i, .grip i { width: 4px; height: 4px; background: #a5a5a5; }
  .fx { display: flex; width: 110px; align-items: center; justify-content: space-between; padding: 0 8px 0 9px; margin-right: 6px; flex: none; }
  .fxb { font: italic 28px/30px "Liberation Serif", serif; }
  .formula { display: flex; flex: 1; align-items: center; padding: 0 5px 0 15px; }
  .formula input { flex: 1; padding-bottom: 2px; }
  .marker { position: absolute; left: 1px; top: 0; width: 156px; height: 74px; border: 7px solid #fd3b3b; z-index: 3; pointer-events: none; }

  .work { flex: 1; min-height: 0; display: flex; }
  .sheet { flex: 1; min-width: 0; overflow: hidden; border-right: 1px solid #a9a9a9; background: #fff; }
  table { width: 100%; table-layout: fixed; border-spacing: 0; font-family: "Open Sans", "Noto Sans", sans-serif; font-weight: 300; font-size: 21px; color: #000; }
  .rh { width: 43px; }
  th, td { height: 28px; padding: 2px 3px 0; line-height: 25px; white-space: nowrap; text-align: left; font-weight: 300; }
  td { border-right: 1px solid #dfdfdf; border-bottom: 1px solid #dfdfdf; }
  td.last { border-right: 0; }
  td.num { text-align: right; }
  th { background: #efefef; text-align: center; color: #444; }
  thead th { border-bottom: 1px solid #a9a9a9; background: linear-gradient(#efefef, #c8c8c8) right / 1px 100% no-repeat #efefef; }
  thead th.last { background: #efefef; }
  tbody th { border-right: 1px solid #a9a9a9; background: linear-gradient(to right, #efefef, #cfcfcf) bottom / 100% 1px no-repeat #efefef; padding: 2px 0 0; }
  .corner { padding: 0 3px 3px 0; }
  .corner svg { margin-left: auto; }
  thead th.sel-h { padding-top: 1px; background: #e1e1e1; color: #217346; border-bottom: 2px solid #217346; }
  tbody th.sel-r { background: #e1e1e1; color: #217346; border-right: 2px solid #217346; }
  .cur { position: relative; }
  .cur::before { content: ""; position: absolute; inset: -2px; border: 2px solid #217346; }
  .cur::after { content: ""; position: absolute; right: -4px; bottom: -4px; width: 7px; height: 7px; background: #217346; border: solid #fff; border-width: 1px 0 0 1px; }
  .vscroll { display: flex; flex-direction: column; align-items: center; width: 26px; margin: 0 1px 0 2px; padding: 8px 0 4px; background: #f4f4f4; border-radius: 13px 13px 0 0; flex: none; }
  .vscroll i { width: 12px; height: 26px; margin: 8px 0 auto; border-radius: 6px; background: #6e6e6e; }

  .sheets { display: flex; flex: none; height: 34px; border-top: 1px solid #a9a9a9; border-bottom: 1px solid #fff; background: #f5f5f5; padding-left: 14px; align-items: center; }
  .nav { width: 34px; }
  .stab { align-self: flex-start; width: 72px; height: 31px; margin: -1px 0 0 33px; padding-bottom: 6px; line-height: 20px; background: #fff; color: #217346; border: solid #a9a9a9; border-width: 0 1px; box-shadow: inset 0 -2px #217346; font-size: 20px; font-weight: 500; }
  .add { margin-left: 37px; }
  .hscroll { display: flex; align-items: center; width: 1014px; max-width: 45%; height: 32px; margin-left: auto; padding-right: 6px; margin-right: 30px; background: #f4f4f4; }
  .grip { width: 33px; height: 32px; margin-right: 8px; background: #efefef; display: flex; flex-direction: column; align-items: center; justify-content: center; gap: 3px; }
  .grip i { width: 3px; height: 3px; }
  .track { flex: 1; margin: 0 0 0 8px; padding-right: 56px; }
  .track i { height: 12px; border-radius: 6px; background: #6e6e6e; }

  .status { display: flex; flex: none; height: 32px; align-items: center; padding-left: 10px; background: #f4f4f4; }
  .acc { margin-left: 28px; gap: 4px; }
  .st-right { position: relative; display: flex; height: 32px; align-items: center; margin-left: auto; padding-right: 13px; }
  .disp { gap: 3px; margin-right: 26px; }
  .view { width: 60px; height: 32px; }
  .view.on { background: #e0e0e0; }
  .zb { width: 11px; height: 24px; margin-left: 8px; }
  .status input { appearance: none; width: 148px; height: 16px; margin-left: 9px; background: linear-gradient(#666, #666) center / 100% 2px no-repeat; }
  .status input::-webkit-slider-thumb { appearance: none; width: 8px; height: 16px; background: #666; }
  .pct { margin-left: 20px; }
  .wm { position: absolute; right: 12px; bottom: 0; font-size: 14px; line-height: 20px; color: #8889; }
  .floor { height: 2px; flex: none; background: linear-gradient(90deg, #e0c8d6, #cfc6e0 35%, #dfc6d6 60%, #d8c4e6 70%, #ecd6ee); }
  .edge { width: 2px; flex: none; display: flex; flex-direction: column; }
  .e1 { flex: 1011; background: #f5f5f5; } .e2 { flex: 21; background: #6e6e6e; } .e3b { flex: 48; background: #eed8e2; } .e4 { flex: 450; background: #000; }
</style>
